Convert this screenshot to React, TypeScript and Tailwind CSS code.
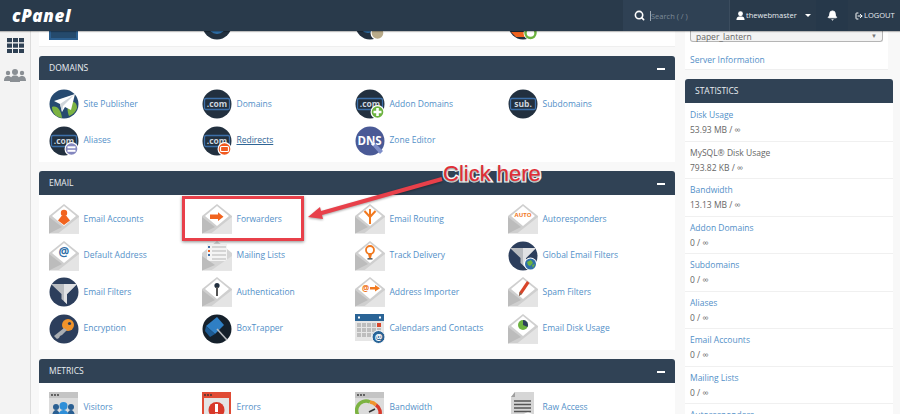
import type { ReactNode } from 'react';
import { Bell, LogOut, Search } from 'lucide-react';

const sans = '"Open Sans", "Liberation Sans", sans-serif';

function Env({ children }: { children?: ReactNode }) {
  return (
    <svg viewBox="0 0 30 30" className="w-[30px] h-[30px] shrink-0">
      <path d="M0 12 15 0 30 12V29.5H0Z" fill="#cfcfcf" />
      <path d="M3 12 15 2 27 12 15 22Z" fill="#fff" />
      <path d="M0 13 13 23 0 29.5Z" fill="#bcbcbc" />
      <path d="M30 13 9 29.5H30Z" fill="#e4e4e4" />
      {children}
    </svg>
  );
}

function Round({ bg, children }: { bg: string; children?: ReactNode }) {
  return (
    <svg viewBox="0 0 30 30" className="w-[30px] h-[30px] shrink-0">
      <circle cx="15" cy="15" r="14.5" fill={bg} />
      {children}
    </svg>
  );
}

function Com({ label = '.com' }: { label?: string }) {
  return (
    <>
      <rect x="2.5" y="9.5" width="25" height="11" rx="1.5" fill="none" stroke="#3d6fa8" strokeWidth="1.3" />
      <text x="15" y="18" textAnchor="middle" fontSize="8.5" fontWeight="700" fill="#ccd5de" fontFamily="Open Sans">
        {label}
      </text>
    </>
  );
}

function Badge({ fill, children }: { fill: string; children?: ReactNode }) {
  return (
    <>
      <circle cx="22.5" cy="23" r="7" fill="#fff" />
      <circle cx="22.5" cy="23" r="5.8" fill={fill} />
      {children}
    </>
  );
}

function Funnel() {
  return (
    <g>
      <path d="M2 7H28L18 17V27L12.5 22V17Z" fill="#b9bcc0" />
      <path d="M15 7H28L18 17V27L15 24Z" fill="#e0e1e3" />
    </g>
  );
}

function Win({ head = '#c4c4c4', children }: { head?: string; children?: ReactNode }) {
  return (
    <svg viewBox="0 0 30 30" className="w-[30px] h-[30px] shrink-0">
      <rect x="0" y="0" width="29" height="30" fill="#dcdcdc" />
      <rect x="0" y="0" width="29" height="6" fill={head} />
      <circle cx="3" cy="3" r="0.9" fill="#333" />
      <circle cx="6" cy="3" r="0.9" fill="#333" />
      <circle cx="9" cy="3" r="0.9" fill="#333" />
      {children}
    </svg>
  );
}

const icons: Record<string, ReactNode> = {
  files: (
    <svg viewBox="0 0 30 30" className="w-[30px] h-[30px] shrink-0">
      <rect x="0" y="0" width="29" height="30" fill="#2c5f8f" />
      <rect x="2" y="4" width="25" height="24" fill="#254a6c" />
    </svg>
  ),
  blueCircle: (
    <Round bg="#22303f">
      <circle cx="15" cy="15" r="9" fill="#2f6fa8" />
    </Round>
  ),
  blueBadge: (
    <Round bg="#22303f">
      <circle cx="13" cy="14" r="9" fill="#2f6fa8" />
      <Badge fill="#b9ab8a" />
    </Round>
  ),
  orangeBadge: (
    <Round bg="#22303f">
      <path d="M3 22H20V27H8Z" fill="#f1631f" />
      <circle cx="22.5" cy="23" r="7" fill="#fff" />
      <circle cx="22.5" cy="23" r="5" fill="none" stroke="#6cb33f" strokeWidth="2.4" />
    </Round>
  ),
  sitePublisher: (
    <Round bg="#264a70">
      <path d="M3 18C8 16 12 21 13 29 7 28 3 24 3 18Z" fill="#7cb342" />
      <path d="M21 13C26 12 28 15 28 19 26 24 23 26 20 27 18 22 18 17 21 13Z" fill="#7cb342" />
      <path d="M26 5 5 12 11 15 13 23 16 18 22 21Z" fill="#fff" />
      <path d="M26 5 11 15 13 23 14 17Z" fill="#cfd5da" />
    </Round>
  ),
  domains: (
    <Round bg="#22303f">
      <Com />
    </Round>
  ),
  addon: (
    <Round bg="#22303f">
      <Com />
      <Badge fill="#6cb33f">
        <path d="M21.2 19H23.8V21.7H26.5V24.3H23.8V27H21.2V24.3H18.5V21.7H21.2Z" fill="#fff" />
      </Badge>
    </Round>
  ),
  sub: (
    <Round bg="#22303f">
      <Com label="sub." />
    </Round>
  ),
  aliases: (
    <Round bg="#22303f">
      <Com />
      <Badge fill="#8487bf">
        <rect x="18.5" y="20.3" width="8" height="2" fill="#fff" />
        <rect x="18.5" y="23.8" width="8" height="2" fill="#fff" />
      </Badge>
    </Round>
  ),
  redirects: (
    <Round bg="#22303f">
      <Com />
      <Badge fill="#f1591f">
        <rect x="18.5" y="20.5" width="8" height="5" rx="1" fill="none" stroke="#fff" strokeWidth="1.2" />
      </Badge>
    </Round>
  ),
  dns: (
    <Round bg="#4a5a96">
      <text x="14.5" y="19" textAnchor="middle" fontSize="11.5" fontWeight="700" fill="#fff" fontFamily="Open Sans">
        DNS
      </text>
      <path d="M16 18 19 16 28 25 25 28Z" fill="#7f8fc9" />
      <path d="M16 18 19 16 20 18 18 20Z" fill="#fff" />
    </Round>
  ),
  emailAccounts: (
    <Env>
      <circle cx="15" cy="9" r="3.2" fill="#f1631f" />
      <path d="M9 16.5 12.5 12H17.5L21 16.5 15 21Z" fill="#f1631f" />
    </Env>
  ),
  forwarders: (
    <Env>
      <path d="M8 10.5H16V8.3L21.5 12.7 16 17.1V14.9H8Z" fill="#f1631f" />
    </Env>
  ),
  routing: (
    <Env>
      <path d="M15 20V5M15 13 9.5 7M15 13 20.5 7" stroke="#f1791f" strokeWidth="2" fill="none" />
    </Env>
  ),
  auto: (
    <Env>
      <text x="15" y="13" textAnchor="middle" fontSize="6" fontWeight="700" fill="#f1791f" fontFamily="Open Sans">
        AUTO
      </text>
    </Env>
  ),
  defaultAddress: (
    <Env>
      <text x="15" y="14.5" textAnchor="middle" fontSize="12" fontWeight="700" fill="#2f6fa8" fontFamily="Open Sans">
        @
      </text>
    </Env>
  ),
  mailing: (
    <svg viewBox="0 0 30 30" className="w-[30px] h-[30px] shrink-0">
      <path d="M0 12 15 0 30 12V29.5H0Z" fill="#d4d4d4" />
      <rect x="5" y="3" width="20" height="17" fill="#f4f4f4" />
      <rect x="6" y="5" width="2" height="2" fill="#3d6fa8" />
      <rect x="6" y="9" width="2" height="2" fill="#f1631f" />
      <rect x="6" y="13" width="2" height="2" fill="#3d6fa8" />
      <path d="M10 6H24M10 10H24M10 14H24M10 18H24" stroke="#b5b5b5" strokeWidth="1" />
      <path d="M0 15 13 24 0 29.5Z" fill="#bcbcbc" />
      <path d="M30 15 9 29.5H30Z" fill="#e4e4e4" />
    </svg>
  ),
  track: (
    <Env>
      <circle cx="15" cy="9" r="4" fill="none" stroke="#f1791f" strokeWidth="1.8" />
      <path d="M13 13H17L16 17H14Z" fill="#f1791f" />
      <rect x="12.5" y="17" width="5" height="1.6" fill="#666" />
    </Env>
  ),
  globalFilters: (
    <Round bg="#2c3e5c">
      <Funnel />
      <circle cx="22.5" cy="23" r="6.5" fill="#fff" />
      <circle cx="22.5" cy="23" r="5.5" fill="#2f6fa8" />
      <path d="M19 21 23 19 25 22 22 25 20 24ZM24 24 27 23 25 27Z" fill="#6cb33f" />
    </Round>
  ),
  emailFilters: (
    <Round bg="#2c3e5c">
      <Funnel />
    </Round>
  ),
  auth: (
    <Env>
      <circle cx="15" cy="8.5" r="2.6" fill="#22303f" />
      <rect x="14" y="10" width="2" height="9" fill="#555" />
    </Env>
  ),
  importer: (
    <Env>
      <text x="10.5" y="14" textAnchor="middle" fontSize="8" fontWeight="700" fill="#f1791f" fontFamily="Open Sans">
        @
      </text>
      <path d="M15 10H20V8L25 11.3 20 14.5V12.5H15Z" fill="#f1791f" />
    </Env>
  ),
  spam: (
    <Env>
      <path d="M19 4 21.5 6 14 17 11 19 11.5 15Z" fill="#d8452a" />
      <path d="M11 19 11.5 15 14 17Z" fill="#7a6a55" />
    </Env>
  ),
  encryption: (
    <Round bg="#2c3e5c">
      <circle cx="19" cy="11" r="6" fill="#f0932b" />
      <circle cx="20.5" cy="9.5" r="1.6" fill="#2c3e5c" />
      <path d="M15 14 5 22 8 25 10 24 11 22 13 21 18 16Z" fill="#a9adb2" />
    </Round>
  ),
  boxTrapper: (
    <Round bg="#15202b">
      <path d="M4 12 15 3 22 11 13 20Z" fill="#2f7fc4" />
      <path d="M4 12 13 20 8 23 3 17Z" fill="#1d5a92" />
      <path d="M15 15 25 26" stroke="#b9bcc0" strokeWidth="1.6" />
    </Round>
  ),
  calendar: (
    <svg viewBox="0 0 30 30" className="w-[30px] h-[30px] shrink-0">
      <rect x="0" y="0" width="29" height="27" fill="#e6e6e6" />
      <rect x="0" y="0" width="29" height="7" fill="#2a6496" />
      <rect x="3" y="2.5" width="2" height="2" fill="#fff" />
      <rect x="24" y="2.5" width="2" height="2" fill="#fff" />
      {[9, 14, 19].map((y) =>
        [2, 7, 12, 17, 22].map((x) => (
          <rect key={`${x}-${y}`} x={x} y={y} width="4" height="4" fill={x === 22 && y === 9 ? '#d8452a' : '#bdbdbd'} />
        ))
      )}
      <circle cx="23.5" cy="23" r="6.5" fill="#2a6496" stroke="#fff" />
      <text x="23.5" y="26" textAnchor="middle" fontSize="8.5" fontWeight="700" fill="#fff" fontFamily="Open Sans">
        @
      </text>
    </svg>
  ),
  diskUsage: (
    <Env>
      <circle cx="15" cy="11" r="5" fill="#6cb33f" />
      <path d="M15 11V6A5 5 0 0 1 19.5 13Z" fill="#2c3e5c" />
    </Env>
  ),
  visitors: (
    <Win>
      <circle cx="7" cy="15" r="3" fill="#2a5f92" />
      <circle cx="22" cy="15" r="3" fill="#2a5f92" />
      <path d="M3 26C3 20 5 18 7 18 9 18 11 20 11 26ZM18 26C18 20 20 18 22 18 24 18 26 20 26 26Z" fill="#2a5f92" />
      <circle cx="14.5" cy="14" r="4" fill="#2f8fd8" />
      <path d="M8 30C8 22 11 18 14.5 18 18 18 21 22 21 30Z" fill="#2f8fd8" />
    </Win>
  ),
  errors: (
    <svg viewBox="0 0 30 30" className="w-[30px] h-[30px] shrink-0">
      <rect x="0" y="0" width="29" height="30" fill="#e04b35" />
      <rect x="2" y="6" width="25" height="24" fill="#e4e4e4" />
      <circle cx="3" cy="3" r="0.9" fill="#333" />
      <circle cx="6" cy="3" r="0.9" fill="#333" />
      <circle cx="9" cy="3" r="0.9" fill="#333" />
      <circle cx="14.5" cy="18" r="8" fill="#d8392a" />
      <rect x="13" y="12" width="3" height="8" fill="#fff" />
      <rect x="13" y="21.5" width="3" height="3" fill="#fff" />
    </svg>
  ),
  bandwidth: (
    <Win>
      <path d="M7 27A9 9 0 0 1 15 10" stroke="#7cb342" strokeWidth="3.5" fill="none" />
      <path d="M15 10A9 9 0 0 1 21 13" stroke="#f0932b" strokeWidth="3.5" fill="none" />
      <path d="M21 13A9 9 0 0 1 24 25" stroke="#d8392a" strokeWidth="3.5" fill="none" />
      <path d="M14 20 20 17" stroke="#333" strokeWidth="1.6" />
    </Win>
  ),
  raw: (
    <svg viewBox="0 0 30 30" className="w-[30px] h-[30px] shrink-0">
      <path d="M7 0H26V30H3V5Z" fill="#d6d6d6" />
      <path d="M7 0V5H3Z" fill="#9e9e9e" />
      <path d="M6 9H23M6 12.5H23M6 16H23M6 19.5H23M6 23H16" stroke="#555" strokeWidth="1.3" />
      <circle cx="20" cy="27" r="6.5" fill="#fff" />
      <circle cx="20" cy="27" r="5" fill="#6cb33f" />
    </svg>
  ),
};

type Item = { name: string; icon: string; hover?: boolean };

const domains: Item[] = [
  { name: 'Site Publisher', icon: 'sitePublisher' },
  { name: 'Domains', icon: 'domains' },
  { name: 'Addon Domains', icon: 'addon' },
  { name: 'Subdomains', icon: 'sub' },
  { name: 'Aliases', icon: 'aliases' },
  { name: 'Redirects', icon: 'redirects', hover: true },
  { name: 'Zone Editor', icon: 'dns' },
];

const email: Item[] = [
  { name: 'Email Accounts', icon: 'emailAccounts' },
  { name: 'Forwarders', icon: 'forwarders' },
  { name: 'Email Routing', icon: 'routing' },
  { name: 'Autoresponders', icon: 'auto' },
  { name: 'Default Address', icon: 'defaultAddress' },
  { name: 'Mailing Lists', icon: 'mailing' },
  { name: 'Track Delivery', icon: 'track' },
  { name: 'Global Email Filters', icon: 'globalFilters' },
  { name: 'Email Filters', icon: 'emailFilters' },
  { name: 'Authentication', icon: 'auth' },
  { name: 'Address Importer', icon: 'importer' },
  { name: 'Spam Filters', icon: 'spam' },
  { name: 'Encryption', icon: 'encryption' },
  { name: 'BoxTrapper', icon: 'boxTrapper' },
  { name: 'Calendars and Contacts', icon: 'calendar' },
  { name: 'Email Disk Usage', icon: 'diskUsage' },
];

const metrics: Item[] = [
  { name: 'Visitors', icon: 'visitors' },
  { name: 'Errors', icon: 'errors' },
  { name: 'Bandwidth', icon: 'bandwidth' },
  { name: 'Raw Access', icon: 'raw' },
];

const stats = [
  { label: 'Disk Usage', value: '53.93 MB / ∞', link: true },
  { label: 'MySQL® Disk Usage', value: '793.82 KB / ∞', link: false },
  { label: 'Bandwidth', value: '13.13 MB / ∞', link: true },
  { label: 'Addon Domains', value: '0 / ∞', link: true },
  { label: 'Subdomains', value: '0 / ∞', link: true },
  { label: 'Aliases', value: '0 / ∞', link: true },
  { label: 'Email Accounts', value: '0 / ∞', link: true },
  { label: 'Mailing Lists', value: '0 / ∞', link: true },
  { label: 'Autoresponders', value: '0 / ∞', link: true },
];

function Grid({ items }: { items: Item[] }) {
  return (
    <div className="grid grid-cols-[repeat(4,153px)] auto-rows-[36.5px] px-[10px] pt-[6px] pb-[3px]">
      {items.map((item) => (
        <div key={item.icon} className="flex items-center gap-[4.5px]">
          {icons[item.icon]}
          <a className={item.hover ? 'text-[8.5px] text-[#2f6595] underline' : 'text-[8.5px] text-[#5390c8]'}>
            {item.name}
          </a>
        </div>
      ))}
    </div>
  );
}

function Panel({ title, items }: { title: string; items: Item[] }) {
  return (
    <section className="shrink-0 bg-white rounded-t-[3px]">
      <div className="h-[24px] bg-[#304255] rounded-t-[3px] flex items-center justify-between pt-[1px] px-[10px]">
        <h2 className="text-[8.5px] text-[#e8edf1]">{title}</h2>
        <span className="w-[8px] h-[2px] bg-white" />
      </div>
      <Grid items={items} />
    </section>
  );
}

export default function App() {
  return (
    <div
      className="relative w-[900px] h-[414px] overflow-hidden bg-[#f8f8f8] flex flex-col"
      style={{ fontFamily: sans }}
    >
      <header className="relative z-10 h-[31px] shrink-0 bg-[#293a4b] flex items-stretch shadow-[0_1px_1px_rgba(0,0,0,0.25)]">
        <div className="w-[623px] pl-[12px] flex items-center">
          <span className="text-[17px] leading-none font-extrabold italic text-white tracking-[0.6px]">cPanel</span>
        </div>
        <div className="w-[107px] bg-[#2f4154] flex items-center pl-[11px] gap-[5px] border-r border-[#3b4c5e]">
          <Search size={11} strokeWidth={3.5} className="text-white" />
          <span className="text-[7.5px] text-[#7e8b98] border-l border-[#9aa5b0] leading-[10px]">Search ( / )</span>
        </div>
        <div className="w-[86px] flex items-center pl-[6px] text-[7.5px] text-[#e8edf1]">
          <svg viewBox="0 0 10 10" className="w-[9px] h-[9px]">
            <circle cx="5" cy="3" r="2.7" fill="#fff" />
            <path d="M0.5 10C0.5 6.5 2.5 6 5 6S9.5 6.5 9.5 10Z" fill="#fff" />
          </svg>
          <span className="ml-[1px]">thewebmaster</span>
          <span className="ml-[8px] border-x-[3px] border-t-[3px] border-x-transparent border-t-white" />
        </div>
        <div className="w-[32px] flex items-center justify-center bg-[#26384a]">
          <Bell size={11} fill="#fff" className="text-white" />
        </div>
        <div className="flex-1 flex items-center pl-[7px] gap-[1px] text-[7.5px] text-[#e8edf1]">
          <LogOut size={8} strokeWidth={3} className="text-white" />
          <span>LOGOUT</span>
        </div>
      </header>

      <div className="flex flex-1 min-h-0">
        <aside className="w-[31px] shrink-0 bg-[#f3f3f3] border-r border-[#dcdcdc] flex flex-col items-center pt-[7px]">
          <svg viewBox="0 0 17 15" className="w-[17px] h-[15px]">
            {[0, 5.5, 11].map((y) =>
              [0, 6, 12].map((x) => <rect key={`${x}-${y}`} x={x} y={y} width="5" height="4.2" fill="#2f4154" />)
            )}
          </svg>
          <svg viewBox="0 0 22 13" className="w-[22px] h-[13px] mt-[16px]">
            <circle cx="4" cy="4" r="2.2" fill="#8a8f94" />
            <circle cx="18" cy="4" r="2.2" fill="#8a8f94" />
            <path d="M0 12C0 8 2 7 4 7S8 8 8 12ZM14 12C14 8 16 7 18 7S22 8 22 12Z" fill="#8a8f94" />
            <circle cx="11" cy="3" r="3" fill="#8a8f94" />
            <path d="M6 13C6 8 8 6.5 11 6.5S16 8 16 13Z" fill="#8a8f94" />
          </svg>
        </aside>

        <main className="w-[636px] ml-[8px] shrink-0 flex flex-col gap-[9px] -mt-[21px]">
          <section className="shrink-0 bg-white h-[37px] border-b border-[#efefef]">
            <div className="grid grid-cols-[repeat(4,153px)] px-[10px]">
              {['files', 'blueCircle', 'blueBadge', 'orangeBadge'].map((k) => (
                <div key={k}>{icons[k]}</div>
              ))}
            </div>
          </section>
          <Panel title="DOMAINS" items={domains} />
          <Panel title="EMAIL" items={email} />
          <Panel title="METRICS" items={metrics} />
        </main>

        <aside className="w-[208px] ml-[10px] shrink-0 flex flex-col gap-[9px]">
          <section className="shrink-0 w-[203px] h-[39px] bg-white border-b border-[#efefef] px-[5px] flex flex-col">
            <div className="h-[11px] bg-[#f3f3f3] border border-t-0 border-[#b5b5b5] rounded-b-[3px] flex items-center justify-between px-[5px] text-[8.5px] text-[#666]">
              <span className="leading-[9px]">paper_lantern</span>
              <span className="text-[6px] text-[#777]">▼</span>
            </div>
            <a className="mt-[11px] text-[8.5px] leading-[13px] text-[#5390c8]">Server Information</a>
          </section>
          <section className="shrink-0 bg-white rounded-t-[3px]">
            <div className="h-[24px] bg-[#304255] rounded-t-[3px] flex items-center pt-[1px] px-[10px]">
              <h2 className="text-[8.5px] text-[#e8edf1]">STATISTICS</h2>
            </div>
            <div className="pt-[1px]">
              {stats.map((s) => (
                <div key={s.label} className="h-[37.5px] border-b border-[#f0f0f0] flex flex-col justify-center px-[5px] text-[8.5px] leading-[15px]">
                  <span className={s.link ? 'text-[#5390c8]' : 'text-[#666]'}>{s.label}</span>
                  <span className="text-[#666]">{s.value}</span>
                </div>
              ))}
            </div>
          </section>
        </aside>
      </div>

      {/* annotation drawn over the screenshot */}
      <div className="absolute left-[182px] top-[196px] w-[122px] h-[45px] border-[3px] border-[#e8404a] shadow-[0_1px_3px_rgba(0,0,0,0.45)]" />
      <svg viewBox="0 0 900 414" className="absolute left-0 top-0 w-[900px] h-[414px] pointer-events-none [filter:drop-shadow(0_1px_1px_rgba(0,0,0,0.35))]">
        <path d="M442 179 318 214" stroke="#e8404a" strokeWidth="4" />
        <path d="M308 217 320 207 323 219Z" fill="#e8404a" />
      </svg>
      <span className="absolute left-[443px] top-[161px] text-[22px] leading-[26px] text-[#e32c34] [font-family:'Liberation_Sans',sans-serif] [-webkit-text-stroke:3px_#fff] [paint-order:stroke_fill] [text-shadow:0_1px_2px_rgba(0,0,0,0.5)]">
        Click here
      </span>
    </div>
  );
}
